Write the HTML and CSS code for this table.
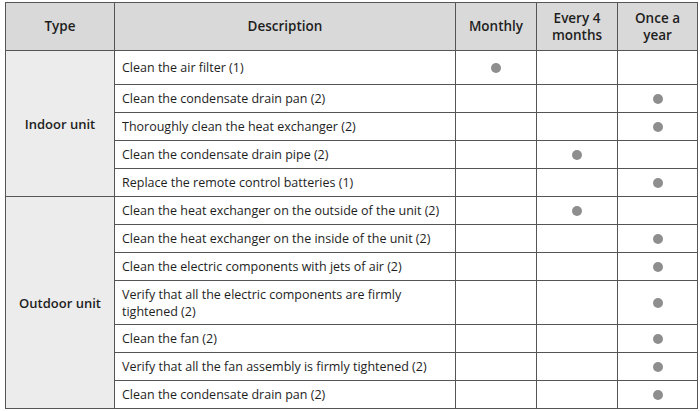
FILE: index.html
```html
<!DOCTYPE html>
<html>
<head>
<meta charset="utf-8">
<link rel="stylesheet" href="styles.css">
</head>
<body>
<table class="sched">
  <colgroup>
    <col class="c-type"><col class="c-desc"><col class="c-freq"><col class="c-freq"><col class="c-last">
  </colgroup>
  <thead>
    <tr class="head">
      <th>Type</th>
      <th>Description</th>
      <th>Monthly</th>
      <th>Every 4<br>months</th>
      <th>Once a<br>year</th>
    </tr>
  </thead>
  <tbody>
    <tr class="r-first">
      <td class="type" rowspan="5">Indoor unit</td>
      <td class="desc">Clean the air filter (1)</td>
      <td class="mark"><span class="dot"></span></td><td class="mark"></td><td class="mark"></td>
    </tr>
    <tr class="r">
      <td class="desc">Clean the condensate drain pan (2)</td>
      <td class="mark"></td><td class="mark"></td><td class="mark"><span class="dot"></span></td>
    </tr>
    <tr class="r">
      <td class="desc">Thoroughly clean the heat exchanger (2)</td>
      <td class="mark"></td><td class="mark"></td><td class="mark"><span class="dot"></span></td>
    </tr>
    <tr class="r">
      <td class="desc">Clean the condensate drain pipe (2)</td>
      <td class="mark"></td><td class="mark"><span class="dot"></span></td><td class="mark"></td>
    </tr>
    <tr class="r">
      <td class="desc">Replace the remote control batteries (1)</td>
      <td class="mark"></td><td class="mark"></td><td class="mark"><span class="dot"></span></td>
    </tr>
    <tr class="r">
      <td class="type" rowspan="8">Outdoor unit</td>
      <td class="desc">Clean the heat exchanger on the outside of the unit (2)</td>
      <td class="mark"></td><td class="mark"><span class="dot"></span></td><td class="mark"></td>
    </tr>
    <tr class="r">
      <td class="desc">Clean the heat exchanger on the inside of the unit (2)</td>
      <td class="mark"></td><td class="mark"></td><td class="mark"><span class="dot"></span></td>
    </tr>
    <tr class="r">
      <td class="desc">Clean the electric components with jets of air (2)</td>
      <td class="mark"></td><td class="mark"></td><td class="mark"><span class="dot"></span></td>
    </tr>
    <tr class="r-tall">
      <td class="desc">Verify that all the electric components are firmly<br>tightened (2)</td>
      <td class="mark"></td><td class="mark"></td><td class="mark"><span class="dot"></span></td>
    </tr>
    <tr class="r">
      <td class="desc">Clean the fan (2)</td>
      <td class="mark"></td><td class="mark"></td><td class="mark"><span class="dot"></span></td>
    </tr>
    <tr class="r">
      <td class="desc">Verify that all the fan assembly is firmly tightened (2)</td>
      <td class="mark"></td><td class="mark"></td><td class="mark"><span class="dot"></span></td>
    </tr>
    <tr class="r">
      <td class="desc">Clean the condensate drain pan (2)</td>
      <td class="mark"></td><td class="mark"></td><td class="mark"><span class="dot"></span></td>
    </tr>
  </tbody>
</table>
</body>
</html>
```
FILE: styles.css
```css
html, body {
  margin: 0;
  padding: 0;
  background: #ffffff;
}
body {
  padding: 2px 0 0 5px;
  font-family: "Open Sans", "Noto Sans", sans-serif;
  color: #1e1e1e;
}
.sched {
  border-collapse: collapse;
  table-layout: fixed;
  width: 692px;
  border: 1px solid #4a4a4a;
}
.c-type { width: 109px; }
.c-desc { width: 341px; }
.c-freq { width: 81px; }
.c-last { width: 80px; }
.sched th, .sched td {
  border: 1px solid #555555;
  padding: 0;
}
.head th {
  height: 47px;
  background: #d9d9d9;
  font-weight: 600;
  font-size: 13.5px;
  line-height: 17px;
  text-align: center;
  vertical-align: middle;
}
.type {
  background: #ececec;
  font-weight: 600;
  font-size: 13px;
  text-align: center;
  vertical-align: middle;
}
.desc {
  font-size: 12.5px;
  line-height: 17px;
  padding-left: 7px !important;
  vertical-align: middle;
}
.r-first td { height: 33px; }
.r td { height: 27px; }
.r-tall td { height: 43px; }
.mark {
  text-align: center;
  vertical-align: middle;
  line-height: 0;
}
.dot {
  display: inline-block;
  width: 10px;
  height: 10px;
  border-radius: 50%;
  background: #8e8e8e;
}
```
